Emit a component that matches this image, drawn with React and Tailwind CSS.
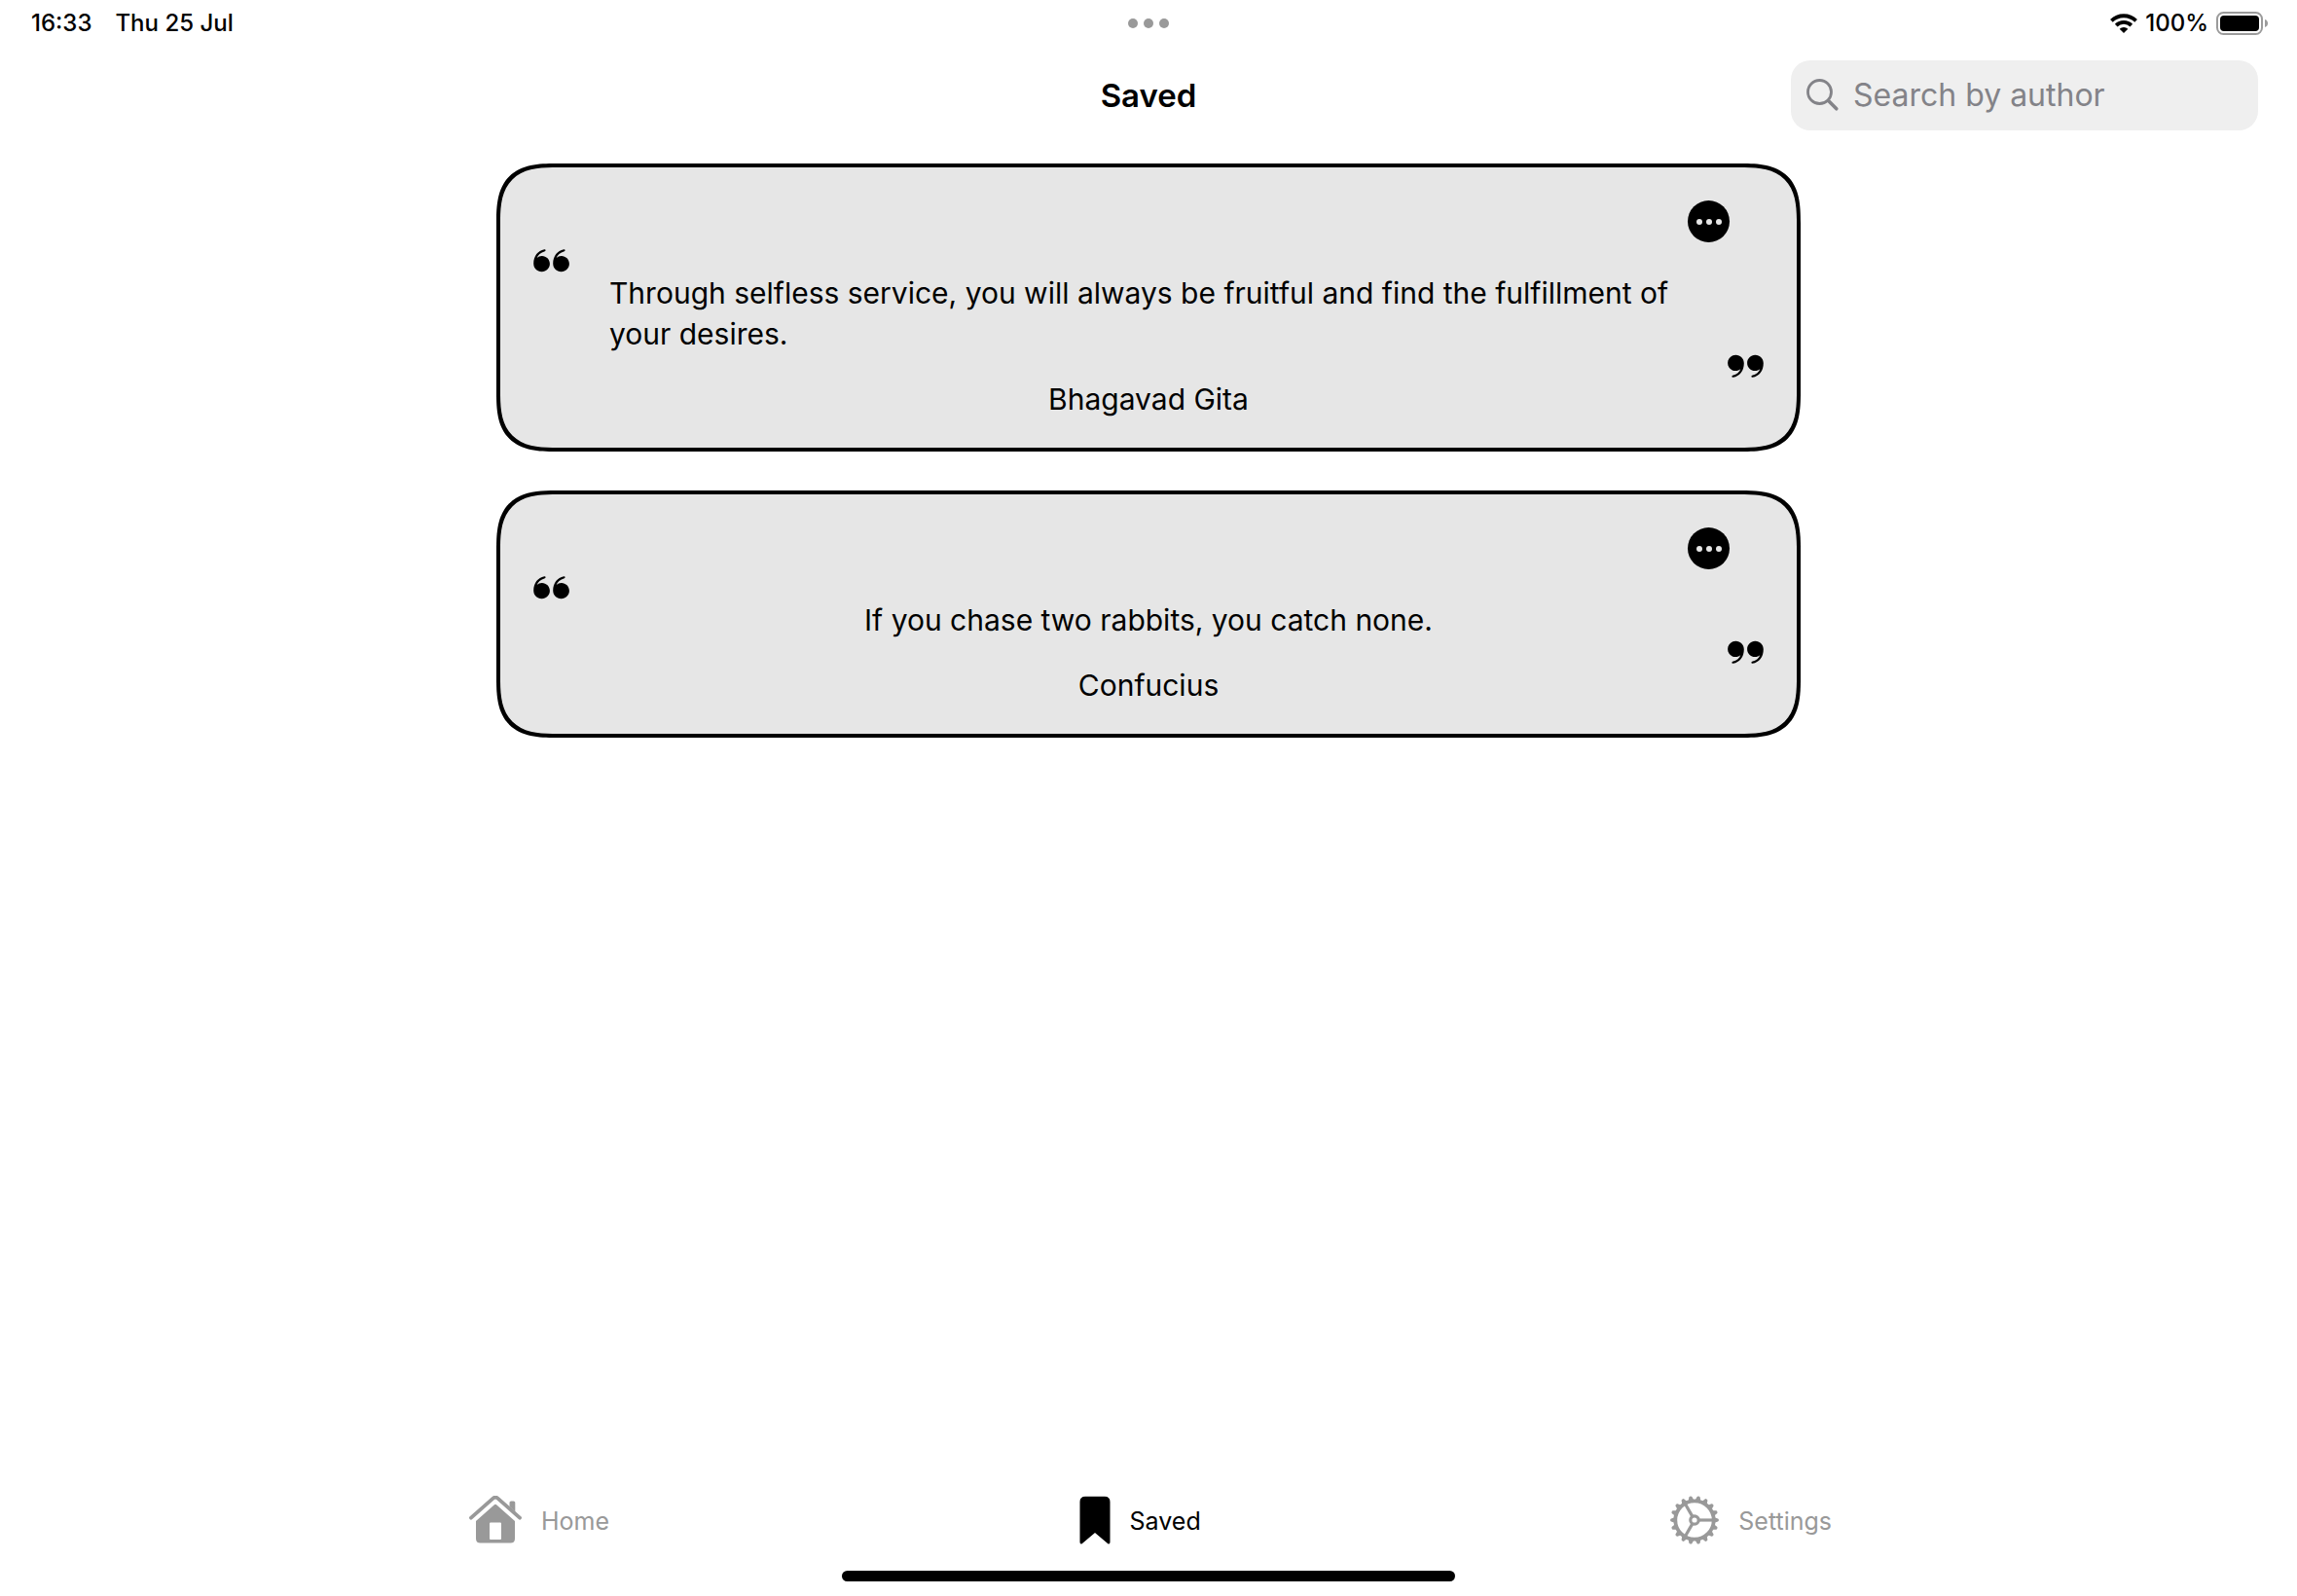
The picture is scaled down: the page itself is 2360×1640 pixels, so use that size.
const quotes = [
  {
    id: 1,
    text: "Through selfless service, you will always be fruitful and find the fulfillment of your desires.",
    author: "Bhagavad Gita",
  },
  { id: 2, text: "If you chase two rabbits, you catch none.", author: "Confucius" },
];

function WifiIcon() {
  return (
    <svg className="h-5 w-7" viewBox="0 0 28 20" fill="none" stroke="currentColor" strokeWidth="3.8" aria-hidden="true">
      <path d="M1.4 7.4a18 18 0 0 1 25.2 0" />
      <path d="M6.2 12.1a11.2 11.2 0 0 1 15.6 0" />
      <path d="M14 20l-4.3-4.3a6.2 6.2 0 0 1 8.6 0z" fill="currentColor" stroke="none" />
    </svg>
  );
}

function BatteryIcon() {
  return (
    <svg className="h-6 w-[54px]" viewBox="0 0 54 24" aria-hidden="true">
      <rect x="1" y="1" width="46" height="22" rx="6.5" fill="none" stroke="#9b9b9b" strokeWidth="2" />
      <rect x="4" y="4" width="40" height="16" rx="4" />
      <path d="M50 8c2 .6 3 2.2 3 4s-1 3.4-3 4z" fill="#9b9b9b" />
    </svg>
  );
}

function SearchIcon() {
  return (
    <svg className="h-[34px] w-[34px]" viewBox="0 0 34 34" fill="none" stroke="currentColor" strokeLinecap="round" aria-hidden="true">
      <circle cx="13.5" cy="13.5" r="12" strokeWidth="2.8" />
      <path d="M22.6 22.6l8.2 8.2" strokeWidth="3.6" />
    </svg>
  );
}

function QuoteMark({ className }) {
  return (
    <svg className={className} viewBox="0 0 38 24" aria-hidden="true">
      {[0, 20].map((x) => (
        <path
          key={x}
          transform={`translate(${x} 0)`}
          d="M.2 14.8C.2 7 4.6 1.5 11.3.2c1.5-.2 1.8 1.6.5 2C7.6 3.5 4.5 6 3.7 9.100 5 7.800 6.800 7 8.800 7c4.500 0 8.100 3.600 8.100 8.100s-3.700 8.200-8.200 8.200C3.800 23.300.2 19.700.2 14.800z"
        />
      ))}
    </svg>
  );
}

function HomeIcon() {
  return (
    <svg className="h-[50px] w-[54px]" viewBox="0 0 54 50" fill="currentColor" aria-hidden="true">
      <path d="M2 22.7L24.6 2.6q2.4-2 4.8 0L52 22.7" fill="none" stroke="currentColor" strokeWidth="3.8" strokeLinecap="round" strokeLinejoin="round" />
      <path d="M41.5 11V7q0-1.6 1.6-1.6h2.6q1.6 0 1.6 1.6v9.5z" />
      <path fillRule="evenodd" d="M25.9 9.2q1.1-.9 2.2 0L47 26v18q0 4.500-4.500 4.500h-31Q7 48.500 7 44V26zM22 27.500q-1 0-1 1V44q0 1 1 1h10q1 0 1-1V28.500q0-1-1-1z" />
    </svg>
  );
}

function BookmarkIcon() {
  return (
    <svg className="h-[50px] w-8" viewBox="0 0 32 50" fill="currentColor" aria-hidden="true">
      <path d="M6 .8h20q5.500 0 5.500 5.500v41.200q0 2.500-2.200 1.700L16 38 2.700 49.200Q.5 50 .5 47.500V6.300Q.5.8 6 .8z" />
    </svg>
  );
}

const teeth = Array.from({ length: 18 }, (_, i) => i * 20);

function GearIcon() {
  return (
    <svg className="h-[50px] w-[50px]" viewBox="-25 -25 50 50" fill="none" stroke="currentColor" aria-hidden="true">
      <circle r="19.7" strokeWidth="3.8" />
      {teeth.map((a) => (
        <path key={a} d="M20.500-2.800L24-1.600q.9.300.9 1.600t-.9 1.600l-3.500 1.200z" transform={`rotate(${a})`} fill="currentColor" stroke="none" />
      ))}
      {[0, 120, 240].map((a) => (
        <path key={a} d="M4.500 0H19" transform={`rotate(${a})`} strokeWidth="3.2" />
      ))}
      <circle r="4.2" strokeWidth="3.2" />
    </svg>
  );
}

function StatusBar() {
  return (
    <div className="grid h-12 grid-cols-[1fr_auto_1fr] items-center px-[29px] text-[24px] font-medium">
      <div className="flex gap-6 pl-[3px]">
        <time>16:33</time>
        <span>Thu 25 Jul</span>
      </div>
      <button type="button" aria-label="Multitasking" className="flex gap-1.5">
        <span className="size-2.5 rounded-full bg-[#999]" />
        <span className="size-2.5 rounded-full bg-[#999]" />
        <span className="size-2.5 rounded-full bg-[#999]" />
      </button>
      <div className="flex items-center justify-end gap-2">
        <WifiIcon />
        <span>100%</span>
        <BatteryIcon />
      </div>
    </div>
  );
}

function QuoteCard({ text, author }) {
  return (
    <article className="w-full rounded-[42px] border-4 border-black bg-[#e6e6e6] px-[34px] pt-[34px] pb-[29px] text-[30px] leading-[42px] supports-[corner-shape:squircle]:rounded-[61px] supports-[corner-shape:squircle]:[corner-shape:superellipse(1.5)]">
      <div className="mb-[7px] flex justify-end pr-[35px]">
        <button type="button" aria-label="More options" className="flex size-[43px] items-center justify-center gap-1 rounded-full bg-black">
          <span className="size-1.5 rounded-full bg-[#e6e6e6]" />
          <span className="size-1.5 rounded-full bg-[#e6e6e6]" />
          <span className="size-1.5 rounded-full bg-[#e6e6e6]" />
        </button>
      </div>
      <div className="grid grid-cols-[38px_1fr_38px] gap-x-10">
        <QuoteMark className="h-6 w-[38px]" />
        <blockquote className="my-6 justify-self-center">{text}</blockquote>
        <QuoteMark className="h-6 w-[38px] rotate-180 self-end" />
      </div>
      <p className="mt-px text-center">{author}</p>
    </article>
  );
}

function Tab({ icon, label, active }) {
  return (
    <a
      href={"#" + label.toLowerCase()}
      aria-current={active ? "page" : undefined}
      className={"flex items-center gap-5 text-[25px] " + (active ? "text-black" : "text-[#999]")}
    >
      {icon}
      <span className="pt-[3px]">{label}</span>
    </a>
  );
}

export default function App() {
  return (
    <div className="flex min-h-screen flex-col bg-white font-['Inter',sans-serif] text-black">
      <StatusBar />
      <header className="grid grid-cols-[1fr_auto_1fr] items-center px-10 pt-3.5">
        <h1 className="col-start-2 pt-0.5 text-[33px] font-semibold">Saved</h1>
        <label className="flex h-[72px] w-[480px] items-center gap-3.5 justify-self-end rounded-[20px] bg-[#efefef] px-4 text-[#838388]">
          <SearchIcon />
          <input
            type="search"
            aria-label="Search by author"
            placeholder="Search by author"
            className="min-w-0 flex-1 bg-transparent text-[32px] outline-none placeholder:text-[#838388]"
          />
        </label>
      </header>
      <main className="mx-auto flex w-full max-w-[1340px] flex-1 flex-col gap-10 pt-[34px]">
        {quotes.map((q) => (
          <QuoteCard key={q.id} text={q.text} author={q.author} />
        ))}
      </main>
      <footer className="flex flex-col items-center pb-[15px]">
        <nav aria-label="Main" className="flex w-full max-w-[1404px] justify-between pl-1">
          <Tab icon={<HomeIcon />} label="Home" />
          <Tab icon={<BookmarkIcon />} label="Saved" active />
          <Tab icon={<GearIcon />} label="Settings" />
        </nav>
        <div className="mt-[27px] h-[11px] w-[630px] rounded-full bg-black" />
      </footer>
    </div>
  );
}
